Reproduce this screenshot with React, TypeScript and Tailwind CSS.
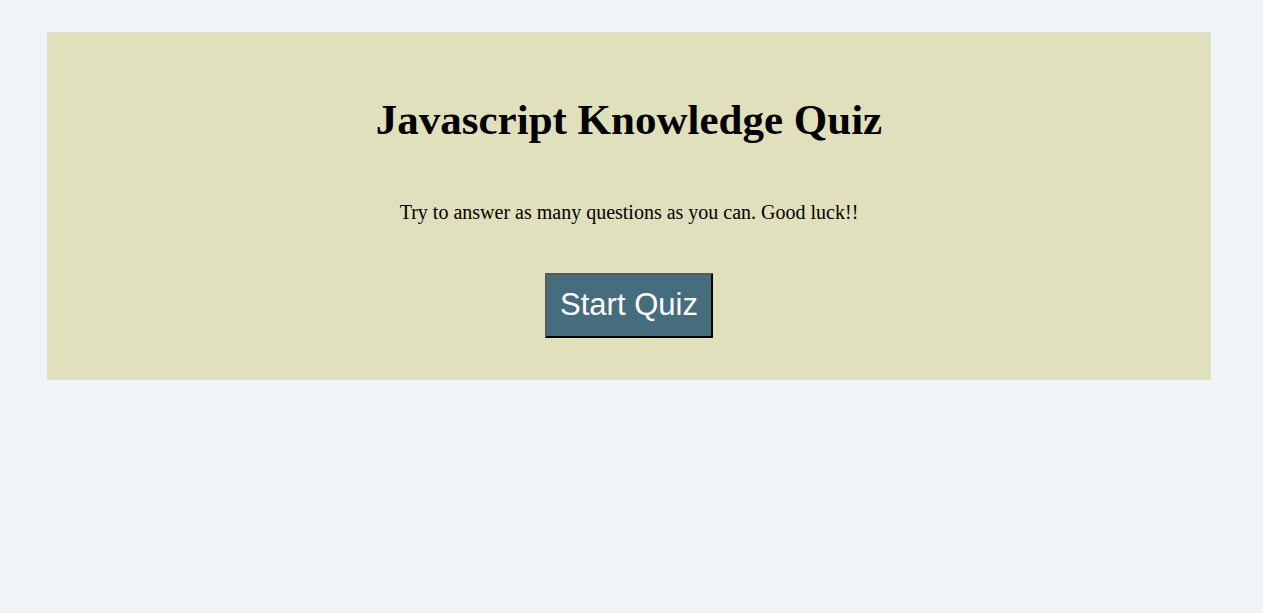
export default function App() {
  return (
    <div className="min-h-[613px] w-full bg-[#eff4f8] pt-[32px]">
      {/* Quiz start card */}
      <section className="ml-[47px] flex w-[1164px] flex-col items-center bg-[#e0e0bc] pt-[63px] pb-[42px] text-black">
        <h1 className="font-['Liberation_Serif',serif] text-[43px] font-bold leading-[normal]">
          Javascript Knowledge Quiz
        </h1>
        <p className="mt-[57px] font-['Liberation_Serif',serif] text-[20px] leading-[normal]">
          Try to answer as many questions as you can. Good luck!!
        </p>
        <button
          type="button"
          className="mt-[49px] border-2 border-t-[#5a5a55] border-l-[#5a5a55] border-r-black border-b-black bg-[#466d7e] px-[13px] pt-[12px] pb-[13px] font-['Liberation_Sans',Arial,sans-serif] text-[31px] leading-[normal] text-white"
        >
          Start Quiz
        </button>
      </section>
    </div>
  );
}
